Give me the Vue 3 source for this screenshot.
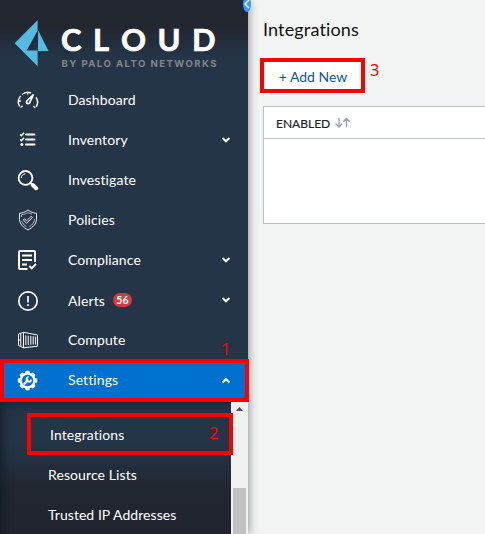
<script setup>
const items = [
  { label: 'Dashboard', icon: 'gauge' },
  { label: 'Inventory', icon: 'list', expand: true },
  { label: 'Investigate', icon: 'search' },
  { label: 'Policies', icon: 'shield' },
  { label: 'Compliance', icon: 'doc', expand: true },
  { label: 'Alerts', icon: 'alert', expand: true, badge: 56 },
  { label: 'Compute', icon: 'container' },
]
const logo = [['C', 61], ['L', 93], ['O', 121], ['U', 157.5], ['D', 192]]
</script>

<template>
  <div class="page">
    <aside class="sidebar">
      <header class="brand">
        <svg class="logo" width="248" height="80" viewBox="0 0 248 80">
          <path d="M37.6 20.2V30.5L26.7 50.5H37.6V66.2L14.7 43.2Z" fill="#54bce4" />
          <path d="M38 30.3L48.5 51H38Z" fill="#54bce4" />
          <text v-for="[ch, x] in logo" :key="ch" :x="x" y="51.3" class="word">{{ ch }}</text>
          <text x="61.5" y="67" class="byline" textLength="155" lengthAdjust="spacing">BY PALO ALTO NETWORKS</text>
        </svg>
      </header>
      <nav>
        <div v-for="it in items" :key="it.label" class="item" :class="it.icon">
          <svg class="icon" width="22" height="22" viewBox="0 0 22 22" fill="none" stroke="#fff" stroke-width="1.4">
            <g v-if="it.icon === 'gauge'">
              <path d="M3.5 18.5L5.5 16.8M2.6 17.4C.7 13.8 1.1 9.5 3.7 6.9M5.1 5.6C7.6 3.3 11 2.8 14 4M19 8.4C21 11.4 21 15 19.2 17.8M18.2 18.7L16.5 17M10.7 3V5.5M2 12H4" />
              <path d="M16.5 5.5L12.8 13.4C12.3 15 9.8 15 9.5 13.4C9.3 12.5 9.8 12 10.3 11.5Z" stroke-width="1.7" />
            </g>
            <g v-else-if="it.icon === 'list'">
              <path d="M9 5.5H17.5M9 10.5H17.5M9 15.5H17.5" stroke-width="2" stroke-linecap="round" />
              <path d="M3.2 5.4L4.5 6.7L7 3.8M3.2 10.4L4.5 11.7L7 8.8" stroke-width="1.6" />
              <circle cx="4.9" cy="15.5" r="1.5" fill="#fff" stroke="none" />
            </g>
            <g v-else-if="it.icon === 'search'" transform="translate(.5 .7)">
              <circle cx="8" cy="8.2" r="6.9" stroke-width="1.8" />
              <path d="M3.8 8.2C3.9 5.8 5.5 4.3 7.8 4.1" stroke-width="1" />
              <path d="M13 13.2L15.3 15.5" />
              <path d="M15.3 15.3L18.7 18.5" stroke-width="4" stroke-linecap="round" />
            </g>
            <g v-else-if="it.icon === 'shield'" stroke-width="1" stroke="#e5e9ed" transform="translate(.5 0)">
              <path d="M10.5 1C7.8 3.2 5 4 2 4.3V10.5C2.1 15 5.8 18.6 10.5 20.9C15.2 18.6 18.9 15 19 10.5V4.3C16 4 13.2 3.2 10.5 1Z" />
              <path d="M14.5 5.1C12.8 4.8 11.5 4.2 10.5 3.5C8.5 4.8 6.5 5.4 4 5.7V8M17 10C17 13.5 14.6 16 11.8 17.8M4.2 12C5 14.6 7 16.4 9 17.7" stroke-width=".7" />
              <path d="M5.8 11.1L7 9.8L9.2 11.8L13.8 7.2L15 8.5L9.2 14.3Z" />
            </g>
            <g v-else-if="it.icon === 'doc'">
              <path d="M10.5 20H3C2.2 20 2 19.8 2 19V3C2 2.2 2.2 2 3 2H17C17.8 2 18 2.2 18 3V13" stroke-width="2" />
              <path d="M5 6.5H15M5 11H15M5 15.5H10" stroke-width="1.9" />
              <path d="M12.3 17L14.8 19.4L19 14.8" stroke-width="2" />
            </g>
            <g v-else-if="it.icon === 'alert'">
              <circle cx="11" cy="11" r="9.2" stroke-width="1.7" />
              <path d="M11 6V12.5M11 14.2V16" stroke-width="1.7" />
            </g>
            <g v-else stroke-width="1">
              <path d="M1.5 5L6.5 3.3L20.5 6V17.2L6.5 18.8L1.5 16.5ZM6.5 3.3V18.8M3.8 4.5V17.3M1.5 11H3.5" />
              <path d="M8.8 6.5V16.3M11.3 6.8V16M13.8 7V15.8M16.2 7.2V15.6M18.5 7.4V15.4" stroke-width="1.2" stroke="#d6dce1" />
            </g>
          </svg>
          <span class="label">{{ it.label }}</span>
          <span v-if="it.badge" class="badge">{{ it.badge }}</span>
          <svg v-if="it.expand" class="chev" width="10" height="8" viewBox="0 0 10 8"><path d="M1.5 2L5 5.3L8.5 2" /></svg>
        </div>
        <div class="item active">
          <svg class="icon" width="22" height="22" viewBox="0 0 22 22">
            <g fill="#fff">
              <circle cx="10.5" cy="11.5" r="8" />
              <rect v-for="a in [0, 45, 90, 135]" :key="a" x="8.3" y="1.8" width="4.4" height="19.4" rx="1.2" :transform="`rotate(${a} 10.5 11.5)`" />
            </g>
            <circle cx="10.5" cy="11.5" r="5.7" fill="#0070ce" />
            <path d="M7.4 14.6L10.6 11.4" stroke="#fff" stroke-width="2.2" stroke-linecap="round" />
            <path d="M14.1 10.6A2.3 2.3 0 1 1 11.6 8.1" fill="none" stroke="#fff" stroke-width="1.7" />
          </svg>
          <span class="label">Settings</span>
          <svg class="chev" width="10" height="8" viewBox="0 0 10 8"><path d="M1.5 6.5L5 3.2L8.5 6.5" /></svg>
        </div>
      </nav>
      <div class="sub">
        <div class="links">
          <div class="link first">Integrations</div>
          <div class="link">Resource Lists</div>
          <div class="link last">Trusted IP Addresses</div>
        </div>
        <div class="scroll">
          <svg width="17" height="17" viewBox="0 0 17 17"><path d="M8.5 5L12 9H5Z" fill="#505050" /></svg>
          <div class="thumb"></div>
        </div>
      </div>
    </aside>
    <main class="content">
      <h1>Integrations</h1>
      <button class="add">+ Add New</button>
      <section class="table">
        <div class="thead">
          <span>ENABLED</span>
          <svg width="16" height="12" viewBox="0 0 16 12" fill="none" stroke="#98a3a3" stroke-width="1.3">
            <path d="M4 1V10M.8 6.7L4 10L7.2 6.7M11.5 10.5V1.5M8.3 4.8L11.5 1.5L14.7 4.8" />
          </svg>
        </div>
      </section>
    </main>
    <div class="handle"><svg width="8" height="12" viewBox="0 0 8 12"><path d="M6 1L2 5L6 9" fill="none" stroke="#fff" stroke-width="1.3" /></svg></div>
    <div class="mark m1"><span>1</span></div>
    <div class="mark m2"><span>2</span></div>
    <div class="mark m3"><span>3</span></div>
  </div>
</template>

<style>
body { margin: 0; overflow: hidden; }
</style>
<style scoped>
.page { position: relative; display: flex; width: 485px; height: 534px; overflow: hidden; background: #f3f5f4; font-family: Lato, sans-serif; }
.sidebar { flex: none; display: flex; flex-direction: column; width: 248px; height: 534px; background: linear-gradient(#22262f 0, #22262f 25px, #243547 58px, #243547 100%); box-shadow: 1px 0 9px rgba(0, 0, 0, .42); z-index: 1; }
.brand { height: 80px; }
.logo { display: block; }
.word { font: 700 31px Lato, sans-serif; fill: #fff; stroke: #fff; stroke-width: .7px; }
.byline { font: 700 9.6px Inter, sans-serif; fill: #858585; }
.item { display: flex; align-items: center; box-sizing: border-box; height: 40px; padding: 0 17px; color: #fff; }
.icon { flex: none; width: 22px; margin-right: 29px; }
.label { font-size: 14px; line-height: 20px; letter-spacing: .1px; }
.alert .icon, .alert .label { margin-top: 2px; }
.badge { width: 19px; height: 14px; margin-left: 8px; margin-bottom: 1px; border-radius: 7px; background: #d13b40; font-size: 10.5px; font-weight: 700; line-height: 14px; text-align: center; }
.chev { margin-left: auto; }
.chev path { fill: none; stroke: #fff; stroke-width: 2; }
.active { height: 42px; padding-bottom: 2px; background: #0070ce; }
.sub { display: flex; flex: 1; min-height: 0; }
.links { flex: 1; padding-top: 13px; background: linear-gradient(#243547 0, #243547 42px, #212630 88px, #20242e 100%); box-shadow: inset 10px 8px 10px -7px rgba(8, 15, 24, .5); }
.link { height: 40px; padding-left: 48px; color: #fff; font-size: 14px; line-height: 40px; letter-spacing: .1px; }
.first { padding-left: 50px; }
.last { letter-spacing: .05px; }
.scroll { width: 17px; background: #f1f1f1; }
.scroll svg { display: block; }
.thumb { width: 13px; height: 60px; margin: 69px auto 0 2px; background: #c1c1c1; }
.content { flex: 1; padding-left: 15px; }
h1 { margin: 18px 0 0; color: #111; font-size: 18px; font-weight: 400; line-height: 22px; letter-spacing: .15px; }
.add { display: block; width: 99px; height: 29px; margin: 21px 0 0; padding: 2px 0 0 1px; border: 0; background: #fff; color: #1552a1; font: 400 14px/26px Lato, sans-serif; }
.table { width: 260px; height: 116px; margin-top: 16px; border: 1px solid #b9bfc3; background: #fff; }
.thead { display: flex; align-items: center; gap: 5px; box-sizing: border-box; height: 32px; padding: 2px 0 0 12px; border-bottom: 1px solid #b9bfc3; color: #20242f; font-size: 12px; -webkit-text-stroke: .2px #20242f; }
.thead svg { margin-bottom: 2px; }
.handle { position: absolute; z-index: 3; left: 243px; top: -4px; width: 8px; height: 16px; border-radius: 50%; background: #359cf5; }
.handle svg { position: absolute; top: 3px; }
.mark { position: absolute; z-index: 4; box-sizing: border-box; border: 4px solid #f00; color: #f00; font: 16.5px/20px "Noto Sans", sans-serif; }
.mark span { position: absolute; }
.m1 { left: 0; top: 359px; width: 249px; height: 43px; }
.m1 span { left: 217px; top: -24px; }
.m2 { left: 27px; top: 413px; width: 206px; height: 42px; }
.m2 span { left: 178px; top: 6px; }
.m3 { left: 260px; top: 58px; width: 105px; height: 35px; }
.m3 span { left: 106px; top: -2px; }
</style>
